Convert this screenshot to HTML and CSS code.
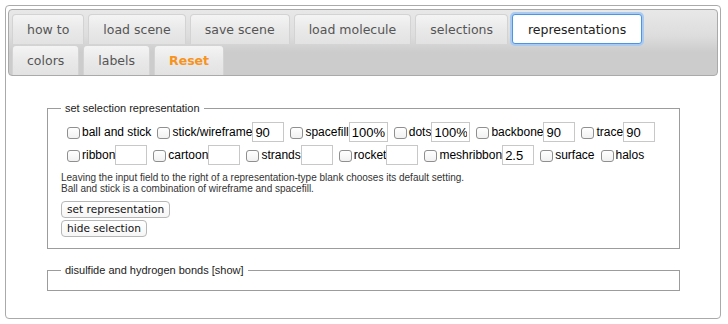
FILE: index.html
```html
<!DOCTYPE html>
<html lang="en">
<head>
  <meta charset="UTF-8" />
  <title>Jmol controls</title>
  <link rel="stylesheet" href="styles.css">
</head>
<body>
  <div class="tabs">
    <div class="tab-bar">
      <div class="tab-row">
        <a class="tab">how to</a>
        <a class="tab">load scene</a>
        <a class="tab">save scene</a>
        <a class="tab">load molecule</a>
        <a class="tab">selections</a>
        <a class="tab active">representations</a>
      </div>
      <div class="tab-row">
        <a class="tab">colors</a>
        <a class="tab">labels</a>
        <a class="tab reset">Reset</a>
      </div>
    </div>

    <div class="panel">
      <fieldset class="group">
        <legend>set selection representation</legend>
        <div class="opt-row">
          <label class="opt"><input type="checkbox"><span>ball and stick</span></label>
          <label class="opt"><input type="checkbox"><span>stick/wireframe</span><input class="val" type="text" value="90"></label>
          <label class="opt"><input type="checkbox"><span>spacefill</span><input class="val wide" type="text" value="100%"></label>
          <label class="opt"><input type="checkbox"><span>dots</span><input class="val wide" type="text" value="100%"></label>
          <label class="opt"><input type="checkbox"><span>backbone</span><input class="val" type="text" value="90"></label>
          <label class="opt"><input type="checkbox"><span>trace</span><input class="val" type="text" value="90"></label>
        </div>
        <div class="opt-row">
          <label class="opt"><input type="checkbox"><span>ribbon</span><input class="val" type="text"></label>
          <label class="opt"><input type="checkbox"><span>cartoon</span><input class="val" type="text"></label>
          <label class="opt"><input type="checkbox"><span>strands</span><input class="val" type="text"></label>
          <label class="opt"><input type="checkbox"><span>rocket</span><input class="val" type="text"></label>
          <label class="opt"><input type="checkbox"><span>meshribbon</span><input class="val" type="text" value="2.5"></label>
          <label class="opt"><input type="checkbox"><span>surface</span></label>
          <label class="opt"><input type="checkbox"><span>halos</span></label>
        </div>
        <p class="help">
          Leaving the input field to the right of a representation-type blank chooses its default setting.<br>
          Ball and stick is a combination of wireframe and spacefill.
        </p>
        <button class="btn">set representation</button>
        <button class="btn">hide selection</button>
      </fieldset>

      <fieldset class="group closed">
        <legend>disulfide and hydrogen bonds [show]</legend>
      </fieldset>
    </div>
  </div>
</body>
</html>
```

FILE: styles.css
```css
body {
  margin: 0;
  padding: 5px 7px 5px 5px;
  font-family: "Liberation Sans", Arial, sans-serif;
  background: #fff;
  color: #000;
}
.tabs {
  border: 1px solid #aaa;
  border-radius: 4px;
  padding: 3px 2px;
  background: #fff;
}
.tab-bar {
  border: 1px solid #aaa;
  border-radius: 4px;
  padding: 3px 3px 0;
  background: linear-gradient(#e8e8e8, #dddddd 40%, #cccccc 65%);
}
.tab-row {
  display: flex;
}
.tab {
  margin: 1px 4px 0 0;
  padding: 6px 14px;
  border: 1px solid #d3d3d3;
  border-bottom: 0;
  border-radius: 4px 4px 0 0;
  background: linear-gradient(#f4f4f4, #e9e9e9 50%, #e2e2e2);
  color: #555;
  font: 12.5px/17px "DejaVu Sans", Verdana, sans-serif;
  white-space: nowrap;
}
.tab.active {
  background: #fff;
  color: #212121;
  border: 1px solid #4f94e3;
  border-radius: 3px;
  box-shadow: 0 0 0 2px #a9cbf2;
  padding: 6px 15px 5px;
}
.tab.reset {
  color: #f7931e;
  font-weight: bold;
}
.panel {
  padding: 26px 38px 24px 39px;
}
.group {
  margin: 0;
  border: 1px solid #9c9c9c;
  padding: 7px 13px 11px;
}
.group legend {
  padding: 0 4px;
  font-size: 11px;
  line-height: 13px;
  color: #222;
}
.group.closed {
  margin-top: 15px;
  padding: 0 13px 13px;
}
.opt-row {
  display: flex;
  align-items: center;
  height: 20px;
}
.opt-row + .opt-row {
  margin-top: 3px;
}
.opt {
  display: inline-flex;
  align-items: center;
  margin-left: 6px;
  font-size: 12px;
  white-space: nowrap;
}
.opt input[type="checkbox"] {
  appearance: none;
  -webkit-appearance: none;
  width: 13px;
  height: 12px;
  margin: 1px 2px 0 0;
  border: 1px solid #8f8f8f;
  border-radius: 3px;
  background: linear-gradient(#fff, #f1f1f1);
}
.val {
  box-sizing: border-box;
  width: 32px;
  height: 20px;
  margin: 0;
  padding: 0 2px;
  border: 1px solid #c8c8c8;
  border-radius: 0;
  font: 13px "Liberation Sans", Arial, sans-serif;
  color: #000;
}
.val.wide {
  width: 39px;
}
.help {
  margin: 7px 0 0;
  font-size: 10px;
  line-height: 11px;
  color: #333;
}
.btn {
  display: block;
  margin: 7px 0 0;
  height: 17px;
  padding: 0 5px;
  border: 1px solid #b7b7b7;
  border-radius: 4px;
  background: linear-gradient(#fff, #f6f6f6);
  font: 10.6px/15px "DejaVu Sans", sans-serif;
  color: #111;
}
.btn + .btn {
  margin-top: 2px;
}
```
